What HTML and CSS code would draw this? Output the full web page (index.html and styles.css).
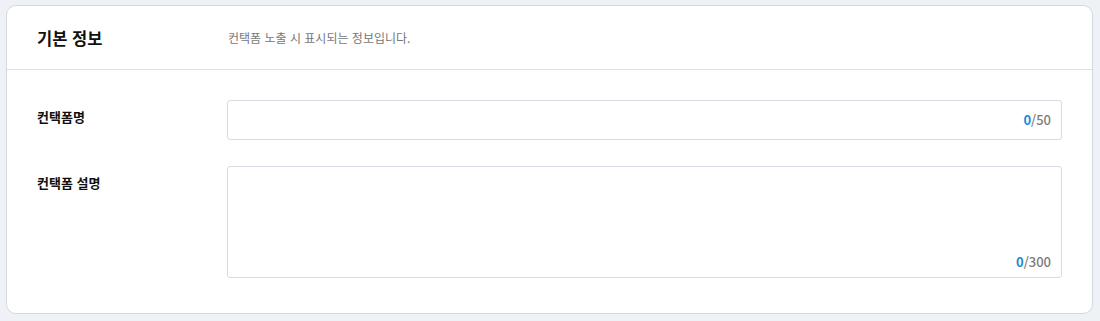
FILE: index.html
```html
<!DOCTYPE html>
<html lang="ko">
<head>
    <meta charset="UTF-8">
    <meta name="viewport" content="width=device-width, initial-scale=1.0">
    <title>기본 정보</title>
    <link rel="stylesheet" href="styles.css">
</head>
<body>
    <div class="card">
        <div class="card-header">
            <h2 class="card-title">기본 정보</h2>
            <p class="card-desc">컨택폼 노출 시 표시되는 정보입니다.</p>
        </div>

        <div class="card-body">
            <!-- 컨택폼명 -->
            <div class="form-row">
                <label class="form-label" for="formName">컨택폼명</label>
                <div class="field field-input">
                    <input type="text" id="formName" class="field-control">
                    <span class="counter"><b>0</b>/50</span>
                </div>
            </div>

            <!-- 컨택폼 설명 -->
            <div class="form-row">
                <label class="form-label" for="formDesc">컨택폼 설명</label>
                <div class="field field-textarea">
                    <textarea id="formDesc" class="field-control"></textarea>
                    <span class="counter"><b>0</b>/300</span>
                </div>
            </div>
        </div>
    </div>
</body>
</html>
```

FILE: styles.css
```css
* {
    margin: 0;
    padding: 0;
    box-sizing: border-box;
}

body {
    font-family: "Noto Sans CJK KR", "Noto Sans", sans-serif;
    background-color: #eef1f6;
    padding: 5px 7px 0 6px;
    color: #111;
}

.card {
    background-color: #fff;
    border: 1px solid #d3d9e1;
    border-radius: 10px;
}

.card-header {
    display: flex;
    align-items: center;
    height: 64px;
    padding: 0 30px;
    border-bottom: 1px solid #dde1e7;
}

.card-title {
    width: 191px;
    font-size: 16.5px;
    font-weight: 700;
    color: #111;
}

.card-desc {
    font-size: 12px;
    color: #777;
}

.card-body {
    display: flex;
    flex-direction: column;
    gap: 26px;
    padding: 30px 30px 35px;
}

.form-row {
    display: flex;
}

.form-label {
    width: 190px;
    flex-shrink: 0;
    padding-top: 7px;
    font-size: 13px;
    font-weight: 700;
    color: #111;
}

.field {
    position: relative;
    flex: 1;
}

.field-control {
    display: block;
    width: 100%;
    border: 1px solid #d7dce4;
    border-radius: 3px;
    font-family: inherit;
    font-size: 13px;
    outline: none;
    resize: none;
}

.field-input .field-control {
    height: 40px;
    padding: 0 60px 0 12px;
}

.field-textarea .field-control {
    height: 112px;
    padding: 10px 12px;
}

/* 글자수 카운터 */
.counter {
    position: absolute;
    right: 11px;
    font-size: 13px;
    font-weight: 500;
    color: #7b7b7b;
}

.counter b {
    font-weight: 700;
    color: #1d8ad6;
}

.field-input .counter {
    top: 10px;
}

.field-textarea .counter {
    bottom: 7px;
}
```
